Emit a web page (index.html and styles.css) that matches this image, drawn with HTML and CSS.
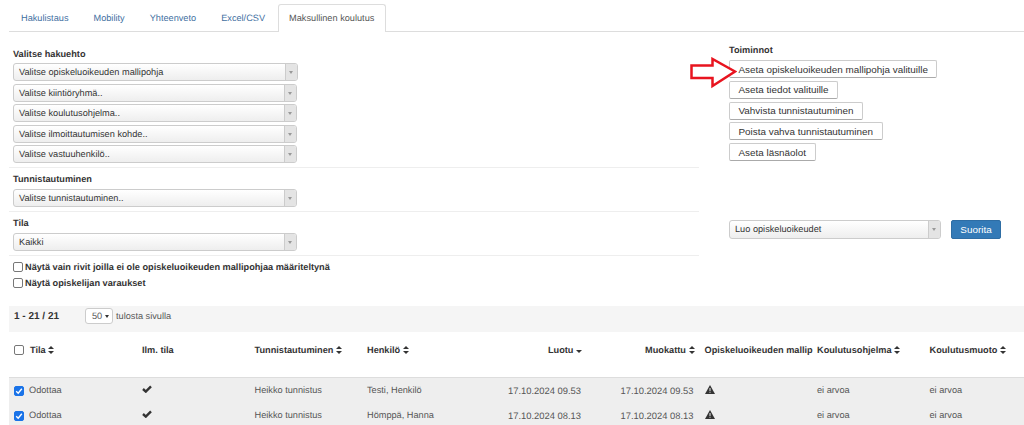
FILE: index.html
```html
<!DOCTYPE html>
<html>
<head>
  <meta charset="utf-8">
  <title>Maksullinen koulutus</title>
  <link rel="stylesheet" href="styles.css">
</head>
<body>
  <ul class="tabs">
    <li>Hakulistaus</li>
    <li>Mobility</li>
    <li>Yhteenveto</li>
    <li>Excel/CSV</li>
    <li class="active">Maksullinen koulutus</li>
  </ul>

  <div class="filters">
    <div class="col-left">
      <div class="section first">
        <label>Valitse hakuehto</label>
        <div class="combo wide"><span>Valitse opiskeluoikeuden mallipohja</span><i></i></div>
        <div class="combo"><span>Valitse kiintiöryhmä..</span><i></i></div>
        <div class="combo"><span>Valitse koulutusohjelma..</span><i></i></div>
        <div class="combo"><span>Valitse ilmoittautumisen kohde..</span><i></i></div>
        <div class="combo"><span>Valitse vastuuhenkilö..</span><i></i></div>
      </div>
      <div class="section">
        <label>Tunnistautuminen</label>
        <div class="combo"><span>Valitse tunnistautuminen..</span><i></i></div>
      </div>
      <div class="section">
        <label>Tila</label>
        <div class="combo"><span>Kaikki</span><i></i></div>
      </div>
      <div class="section checks">
        <div class="check-row"><b class="box"></b>Näytä vain rivit joilla ei ole opiskeluoikeuden mallipohjaa määriteltynä</div>
        <div class="check-row"><b class="box"></b>Näytä opiskelijan varaukset</div>
      </div>
    </div>

    <div class="col-right">
      <label>Toiminnot</label>
      <div class="actions">
        <button class="btn">Aseta opiskeluoikeuden mallipohja valituille</button>
        <svg class="arrow" width="48" height="32" viewBox="0 0 48 32">
          <path d="M2.500 8.500H23.500V2L46 14.500L23.500 29V21H2.500Z" fill="#fff" stroke="#e8141f" stroke-width="2.500"/>
        </svg>
        <button class="btn">Aseta tiedot valituille</button>
        <button class="btn">Vahvista tunnistautuminen</button>
        <button class="btn">Poista vahva tunnistautuminen</button>
        <button class="btn">Aseta läsnäolot</button>
      </div>
      <div class="run-row">
        <div class="combo run"><span>Luo opiskeluoikeudet</span><i></i></div>
        <button class="btn btn-primary">Suorita</button>
      </div>
    </div>
  </div>

  <div class="pager">
    <strong>1 - 21 / 21</strong>
    <span class="page-size">50 <em class="caret"></em></span>
    <span>tulosta sivulla</span>
  </div>

  <table class="results">
    <thead>
      <tr>
        <th><b class="box"></b>Tila <em class="sort"></em></th>
        <th>Ilm. tila</th>
        <th>Tunnistautuminen <em class="sort"></em></th>
        <th>Henkilö <em class="sort"></em></th>
        <th class="num">Luotu <em class="sort-down"></em></th>
        <th class="num">Muokattu <em class="sort"></em></th>
        <th>Opiskeluoikeuden mallip</th>
        <th>Koulutusohjelma <em class="sort"></em></th>
        <th>Koulutusmuoto <em class="sort"></em></th>
      </tr>
    </thead>
    <tbody>
      <tr>
        <td><b class="box checked"><svg width="8" height="8" viewBox="0 0 8 8"><path d="M1.200 4.200L3.200 6.200L6.800 1.800" fill="none" stroke="#fff" stroke-width="1.400"/></svg></b>Odottaa</td>
        <td><svg class="tick" width="10" height="8" viewBox="0 0 10 8"><path d="M1 4L3.800 6.600L9 1.400" fill="none" stroke="#333" stroke-width="2.400"/></svg></td>
        <td>Heikko tunnistus</td>
        <td>Testi, Henkilö</td>
        <td class="num">17.10.2024 09.53</td>
        <td class="num">17.10.2024 09.53</td>
        <td><svg class="warn" width="10" height="9" viewBox="0 0 10 9"><path d="M5 0L10 9H0Z" fill="#333"/><path d="M4.500 3H5.500V6H4.500ZM4.500 6.800H5.500V7.800H4.500Z" fill="#eee"/></svg></td>
        <td>ei arvoa</td>
        <td>ei arvoa</td>
      </tr>
      <tr>
        <td><b class="box checked"><svg width="8" height="8" viewBox="0 0 8 8"><path d="M1.200 4.200L3.200 6.200L6.800 1.800" fill="none" stroke="#fff" stroke-width="1.400"/></svg></b>Odottaa</td>
        <td><svg class="tick" width="10" height="8" viewBox="0 0 10 8"><path d="M1 4L3.800 6.600L9 1.400" fill="none" stroke="#333" stroke-width="2.400"/></svg></td>
        <td>Heikko tunnistus</td>
        <td>Hömppä, Hanna</td>
        <td class="num">17.10.2024 08.13</td>
        <td class="num">17.10.2024 08.13</td>
        <td><svg class="warn" width="10" height="9" viewBox="0 0 10 9"><path d="M5 0L10 9H0Z" fill="#333"/><path d="M4.500 3H5.500V6H4.500ZM4.500 6.800H5.500V7.800H4.500Z" fill="#eee"/></svg></td>
        <td>ei arvoa</td>
        <td>ei arvoa</td>
      </tr>
    </tbody>
  </table>
</body>
</html>
```

FILE: styles.css
```css
html, body {
  margin: 0;
  height: 425px;
  overflow: hidden;
}
body {
  font-family: "Liberation Sans", Arial, sans-serif;
  font-size: 9.2px;
  color: #333;
  background: white;
  text-rendering: geometricPrecision;
}

/* tabs */
.tabs {
  display: flex;
  list-style: none;
  margin: 0 0 0 8.500px;
  padding: 4px 0 0 0;
  height: 27px;
  border-bottom: 1px solid #ddd;
}
.tabs li {
  padding: 0 12.500px;
  line-height: 28px;
  color: #3f6f9f;
}
.tabs li.active {
  height: 28px;
  box-sizing: border-box;
  padding: 0 10.500px;
  line-height: 26px;
  color: #555;
  background: white;
  border: 1px solid #ddd;
  border-bottom: none;
  border-radius: 3px 3px 0 0;
}

/* filters */
.filters {
  display: flex;
  margin-left: 9px;
  height: 274px;
}
.col-left {
  width: 690px;
  flex: none;
}
.col-right {
  margin-left: 30px;
  padding-top: 12px;
}
label {
  display: block;
  font-weight: bold;
  line-height: 12px;
}
.section {
  border-top: 1px solid #eee;
  padding: 5px 0 1px 4px;
}
.section.first {
  border-top: none;
  padding-top: 15.500px;
}
.section label {
  margin-bottom: 4.500px;
}
.section.first label {
  margin-bottom: 3.500px;
}
.combo {
  display: flex;
  box-sizing: border-box;
  width: 284px;
  height: 18px;
  margin-bottom: 2.500px;
  border: 1px solid #ccc;
  border-radius: 3px;
  background: linear-gradient(#fff, #eee);
  line-height: 16px;
}
.combo.wide {
  width: 285px;
}
.combo span {
  flex: 1;
  padding-left: 5px;
}
.combo i {
  position: relative;
  width: 11px;
  background: #e4e4e4;
  border-left: 1px solid #ccc;
  border-radius: 0 2px 2px 0;
}
.combo i:after {
  content: "";
  position: absolute;
  left: 3px;
  top: 7px;
  border: 2.500px solid transparent;
  border-top: 3px solid #999;
  border-bottom: none;
}
.checks {
  padding-left: 0;
  padding-top: 3.500px;
  font-weight: bold;
}
.check-row {
  display: flex;
  align-items: center;
  height: 16px;
}
.box {
  display: inline-flex;
  align-items: center;
  justify-content: center;
  box-sizing: border-box;
  width: 10px;
  height: 10px;
  margin: 0 2px 0 4px;
  vertical-align: -2px;
  background: white;
  border: 1px solid #777;
  border-radius: 2px;
}
.box.checked {
  background: #1a73e8;
  border-color: #1a73e8;
}

/* actions */
.col-right label {
  margin-bottom: 4px;
}
.actions {
  position: relative;
  display: flex;
  flex-direction: column;
  align-items: flex-start;
  gap: 2.750px;
}
.btn {
  font-family: inherit;
  font-size: 9.900px;
  color: #333;
  height: 18px;
  padding: 0 8.500px;
  background: white;
  border: 1px solid #ccc;
  border-bottom-color: #aaa;
  border-radius: 2px;
}
.btn-primary {
  height: 19px;
  width: 50px;
  padding: 0;
  color: white;
  background: #337ab7;
  border-color: #2e6da4;
}
.arrow {
  position: absolute;
  left: -40px;
  top: -3px;
}
.run-row {
  display: flex;
  gap: 10px;
  margin-top: 59px;
}
.combo.run {
  width: 212px;
  height: 19px;
  margin: 0;
}

/* pager */
.pager {
  display: flex;
  align-items: center;
  box-sizing: border-box;
  height: 26px;
  margin-left: 9px;
  padding: 0 0 6px 5px;
  background: #f5f5f5;
  color: #555;
}
.pager strong {
  width: 71px;
  font-size: 10px;
  color: #333;
}
.page-size {
  box-sizing: border-box;
  width: 28px;
  height: 16px;
  margin-right: 3px;
  padding-left: 6px;
  line-height: 14px;
  background: white;
  border: 1px solid #ccc;
  border-radius: 3px;
}
.caret {
  display: inline-block;
  vertical-align: 1px;
  border: 2.500px solid transparent;
  border-top: 3px solid #333;
  border-bottom: none;
}

/* table */
.results {
  table-layout: fixed;
  width: 1028px;
  margin-left: 9px;
  border-collapse: collapse;
}
.results th {
  width: 112.500px;
  height: 45px;
  box-sizing: border-box;
  padding: 0 5px 8px;
  text-align: left;
  white-space: nowrap;
  border-bottom: 1px solid #ddd;
}
.results th:first-child {
  width: 128px;
}
.results .box {
  margin: 0 6px 0 0;
}
.results .box.checked {
  margin-right: 5px;
}
.results td {
  height: 25px;
  padding: 0 5px;
  white-space: nowrap;
  color: #555;
  background: #eee;
}
.results .num {
  text-align: right;
}
.results td.num {
  padding-right: 6px;
  font-size: 9.400px;
}
.sort, .sort-down {
  display: inline-block;
  width: 6px;
  height: 8px;
  position: relative;
  vertical-align: -1px;
}
.sort:before, .sort:after, .sort-down:after {
  content: "";
  position: absolute;
  left: 0;
  border: 3px solid transparent;
}
.sort:before {
  top: -3px;
  border-bottom: 3px solid #333;
}
.sort:after {
  top: 5px;
  border-top: 3px solid #333;
}
.sort-down:after {
  top: 4px;
  border-top: 3px solid #333;
}
```
